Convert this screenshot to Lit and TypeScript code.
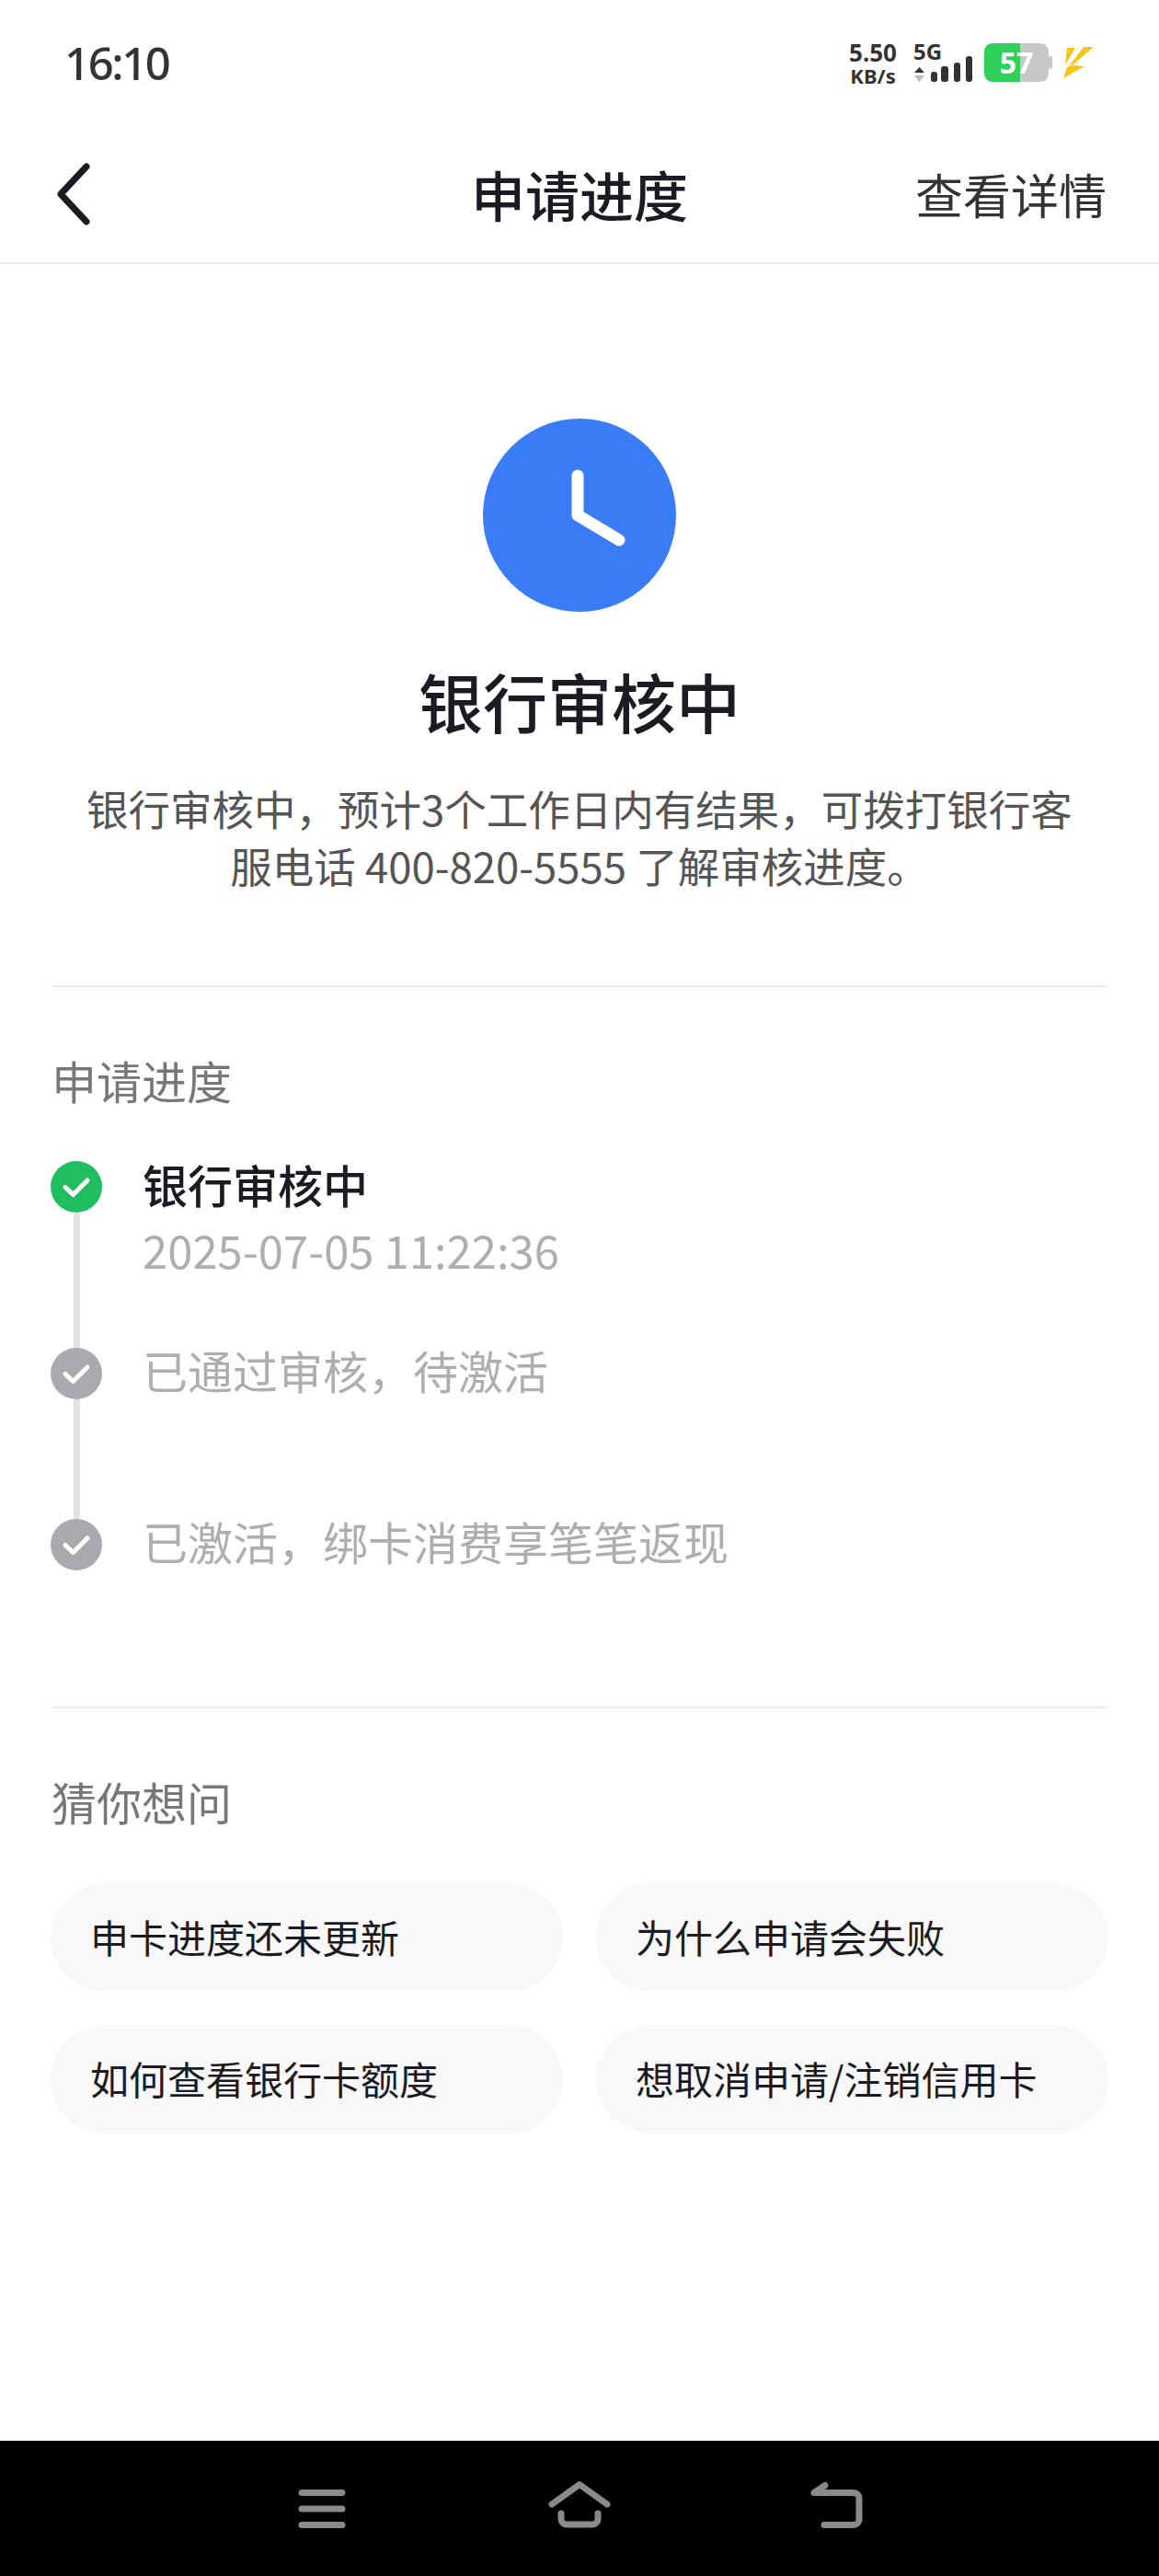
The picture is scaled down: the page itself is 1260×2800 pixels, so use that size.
import { LitElement, html, css, svg } from 'lit';
import { customElement } from 'lit/decorators.js';

const steps = [
  { title: '银行审核中', time: '2025-07-05 11:22:36', done: true },
  { title: '已通过审核，待激活', time: '', done: false },
  { title: '已激活，绑卡消费享笔笔返现', time: '', done: false },
];

const questions = ['申卡进度还未更新', '为什么申请会失败', '如何查看银行卡额度', '想取消申请/注销信用卡'];

const check = svg`<path d="M16 28.5l8.5 8L40 21" fill="none" stroke="#fff" stroke-width="5" stroke-linecap="round" stroke-linejoin="round"/>`;

@customElement('app-root')
export class AppRoot extends LitElement {
  static styles = css`
    :host {
      display: block;
      width: 1260px;
      height: 2800px;
      background: #fff;
      font-family: 'Noto Sans CJK SC', 'Noto Sans', sans-serif;
      color: #1a1b23;
    }
    .page {
      height: 2800px;
      display: flex;
      flex-direction: column;
    }
    .status {
      height: 136px;
      flex: none;
      box-sizing: border-box;
      padding: 0 69px 0 70px;
      display: flex;
      align-items: flex-start;
      justify-content: space-between;
    }
    .time {
      font-family: 'Noto Sans', sans-serif;
      font-size: 49px;
      font-weight: 500;
      line-height: 60px;
      margin-top: 38px;
      letter-spacing: -2.4px;
      color: #333;
    }
    .status-icons {
      display: flex;
      align-items: flex-start;
      margin-top: 45px;
    }
    .speed {
      width: 58px;
      margin-right: 15px;
      text-align: center;
      font-family: 'Noto Sans', sans-serif;
      font-weight: 700;
      color: #333;
      line-height: 25px;
    }
    .speed-value {
      font-size: 26px;
    }
    .speed-unit {
      font-size: 22px;
    }
    .net {
      position: relative;
      width: 66px;
      height: 46px;
      margin-right: 11px;
    }
    .net svg,
    .battery svg,
    .bolt {
      display: block;
    }
    .net-label {
      position: absolute;
      left: 0;
      top: 0;
      font-family: 'Noto Sans', sans-serif;
      font-weight: 700;
      font-size: 24px;
      line-height: 22px;
      color: #333;
    }
    .battery {
      position: relative;
      width: 76px;
      height: 46px;
      margin-right: 9px;
    }
    .battery-level {
      position: absolute;
      left: 0;
      top: 2px;
      width: 70px;
      text-align: center;
      font-family: 'Noto Sans', sans-serif;
      font-weight: 700;
      font-size: 32px;
      line-height: 42px;
      color: #fff;
    }
    .bolt {
      width: 36px;
      height: 46px;
    }
    .header {
      height: 151px;
      flex: none;
      box-sizing: border-box;
      border-bottom: 2px solid #ededed;
      display: grid;
      grid-template-columns: 1fr auto 1fr;
      align-items: center;
      padding: 0 57px;
    }
    .back {
      width: 40px;
      height: 70px;
      display: block;
      margin-left: 4px;
    }
    .header h1 {
      margin: 0;
      font-size: 59px;
      line-height: 80px;
      font-weight: 500;
    }
    .details {
      justify-self: end;
      font-size: 52px;
      line-height: 80px;
      color: #333;
    }
    .content {
      flex: 1;
      padding: 0 55px;
      display: flex;
      flex-direction: column;
    }
    .hero {
      padding-top: 168px;
      padding-bottom: 100px;
      border-bottom: 2px solid #ededed;
      display: flex;
      flex-direction: column;
      align-items: center;
      text-align: center;
    }
    .clock {
      width: 210px;
      height: 210px;
      display: block;
    }
    .hero h2 {
      margin: 52px 0 0;
      font-size: 70px;
      line-height: 90px;
      font-weight: 500;
    }
    .hero p {
      margin: 40px 0 0;
      width: 1090px;
      font-size: 45.5px;
      line-height: 62px;
      color: #555;
    }
    .label {
      font-size: 49px;
      line-height: 60px;
      margin-left: 1px;
      color: #777;
    }
    .progress {
      padding-top: 71px;
      height: 784px;
      box-sizing: border-box;
      border-bottom: 2px solid #ededed;
    }
    .steps {
      margin-top: 58px;
    }
    .step {
      display: flex;
      gap: 44px;
      height: 186px;
    }
    .step.first {
      height: 203px;
    }
    .step.last {
      height: 56px;
    }
    .rail {
      width: 56px;
      flex: none;
      display: flex;
      flex-direction: column;
      align-items: center;
    }
    .dot {
      width: 56px;
      height: 56px;
      flex: none;
      display: block;
    }
    .line {
      flex: 1;
      width: 7px;
      background: #e3e3e3;
    }
    .step-title {
      font-size: 49px;
      line-height: 48px;
      color: #aeaeb2;
    }
    .step.first .step-title {
      line-height: 50px;
      color: #1a1b23;
      font-weight: 500;
    }
    .step-time {
      margin-top: 16px;
      font-size: 49px;
      line-height: 60px;
      color: #aeaeb2;
    }
    .faq {
      padding-top: 71px;
    }
    .chips {
      margin-top: 59px;
      display: grid;
      grid-template-columns: 1fr 1fr;
      gap: 36px;
    }
    .chip {
      height: 118px;
      box-sizing: border-box;
      border-radius: 59px;
      background: #f8f8f8;
      padding: 0 0 3px 43px;
      display: flex;
      align-items: center;
      font-size: 42px;
      color: #1a1b23;
    }
    .nav {
      height: 147px;
      flex: none;
      background: #000;
      display: flex;
      justify-content: center;
    }
    .nav svg {
      width: 700px;
      height: 147px;
      display: block;
    }
  `;

  render() {
    return html`
      <div class="page">
        <div class="status">
          <div class="time">16:10</div>
          <div class="status-icons">
            <div class="speed">
              <div class="speed-value">5.50</div>
              <div class="speed-unit">KB/s</div>
            </div>
            <div class="net">
              <svg width="66" height="46" viewBox="0 0 66 46">
                <path d="M1 34l5.500-6 5.500 6z" fill="#333" />
                <path d="M1 37l5.500 7 5.500-7z" fill="#bbb" />
                <rect x="19" y="33" width="7" height="11" rx="3" fill="#333" />
                <rect x="30" y="27" width="8" height="17" rx="3" fill="#333" />
                <rect x="44" y="23" width="7" height="21" rx="3" fill="#333" />
                <rect x="57" y="16" width="7" height="28" rx="3" fill="#333" />
              </svg>
              <span class="net-label">5G</span>
            </div>
            <div class="battery">
              <svg width="76" height="46" viewBox="0 0 76 46">
                <rect x="0" y="2" width="70" height="42" rx="9" fill="#c8c8c8" />
                <rect x="70" y="16" width="4" height="14" rx="2" fill="#c8c8c8" />
                <path d="M9 2h30v42H9a9 9 0 0 1-9-9V11a9 9 0 0 1 9-9z" fill="#30d158" />
              </svg>
              <span class="battery-level">57</span>
            </div>
            <svg class="bolt" viewBox="0 0 36 46">
              <path d="M5 7h9L3 26z" fill="#f5c518" />
              <path d="M23 6h11L12 25l-5 2z" fill="#f5c518" />
              <path d="M24 27L1 40l4-12 7-2z" fill="#f5c518" />
            </svg>
          </div>
        </div>

        <div class="header">
          <svg class="back" viewBox="0 0 40 70">
            <path d="M33 5L5 35l28 30" fill="none" stroke="#1a1b23" stroke-width="7" stroke-linecap="round" stroke-linejoin="round" />
          </svg>
          <h1>申请进度</h1>
          <div class="details">查看详情</div>
        </div>

        <div class="content">
          <div class="hero">
            <svg class="clock" viewBox="0 0 210 210">
              <circle cx="105" cy="105" r="105" fill="#3a7cf5" />
              <path d="M103 62v43l45 27" fill="none" stroke="#fff" stroke-width="13" stroke-linecap="round" stroke-linejoin="round" />
            </svg>
            <h2>银行审核中</h2>
            <p>银行审核中，预计3个工作日内有结果，可拨打银行客服电话 400-820-5555 了解审核进度。</p>
          </div>

          <div class="progress">
            <div class="label">申请进度</div>
            <div class="steps">
              ${steps.map(
                (step, index) => html`
                  <div class="step ${index === 0 ? 'first' : ''} ${index === steps.length - 1 ? 'last' : ''}">
                    <div class="rail">
                      <svg class="dot" viewBox="0 0 56 56">
                        <circle cx="28" cy="28" r="28" fill=${step.done ? '#1fbf5f' : '#a9a9ae'} />
                        ${check}
                      </svg>
                      ${index < steps.length - 1 ? html`<div class="line"></div>` : ''}
                    </div>
                    <div>
                      <div class="step-title">${step.title}</div>
                      ${step.time ? html`<div class="step-time">${step.time}</div>` : ''}
                    </div>
                  </div>
                `,
              )}
            </div>
          </div>

          <div class="faq">
            <div class="label">猜你想问</div>
            <div class="chips">
              ${questions.map((q) => html`<div class="chip">${q}</div>`)}
            </div>
          </div>
        </div>

        <div class="nav">
          <svg viewBox="0 2 700 147" fill="none" stroke="#8a8a8a" stroke-width="7" stroke-linecap="round" stroke-linejoin="round">
            <path d="M48 58.500h44M48 76h44M48 93.500h44" />
            <path d="M320 71L350 49.500L380 71" />
            <path d="M330 81v6a6 6 0 0 0 6 6h28a6 6 0 0 0 6-6v-6" />
            <path d="M616 93.500h32a6 6 0 0 0 6-6v-23a6 6 0 0 0-6-6h-43l12-8" />
          </svg>
        </div>
      </div>
    `;
  }
}
